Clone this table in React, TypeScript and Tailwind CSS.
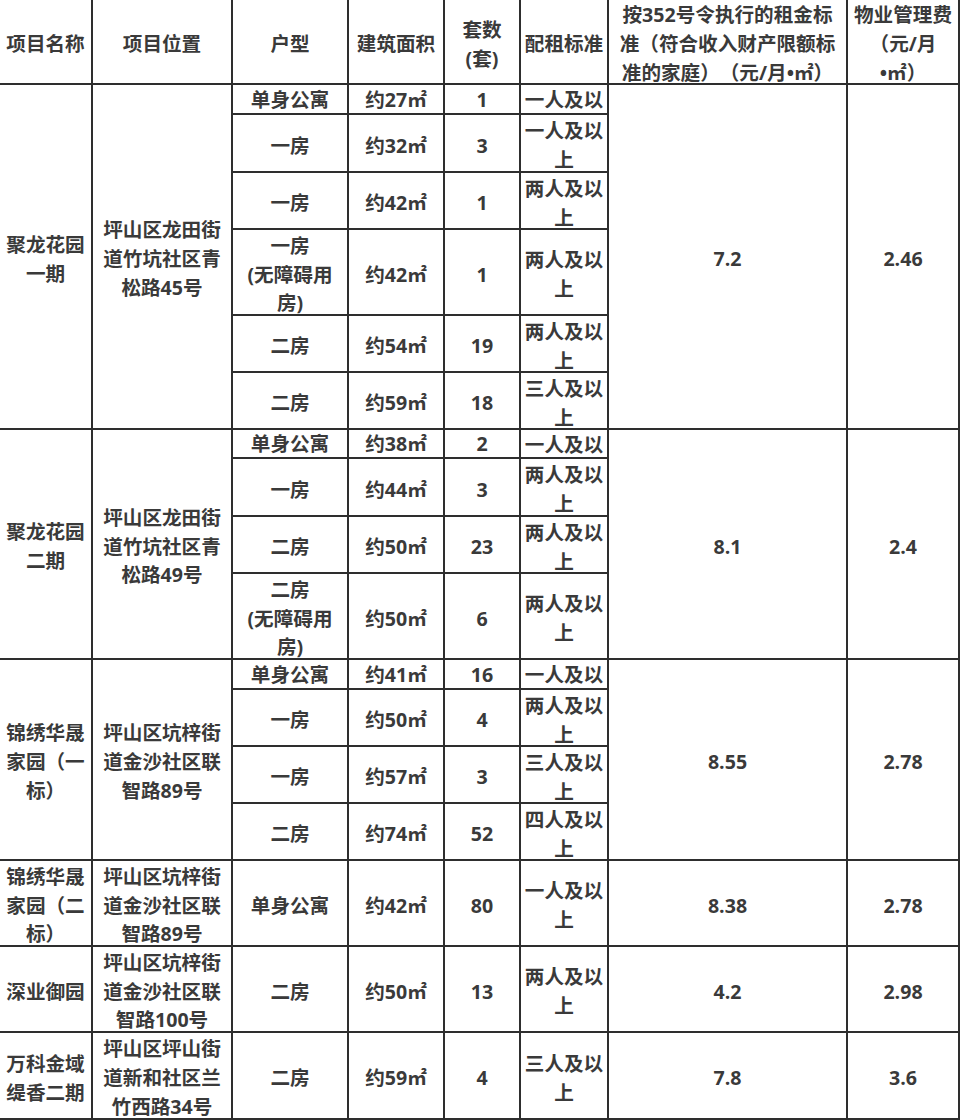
import React from "react";

type Row = { type: string[]; area: string; count: string; std: string[]; clip?: boolean };
type Group = { name: string[]; loc: string[]; rent: string; fee: string; span: string; rows: Row[] };

const groups: Group[] = [
  {
    name: ["聚龙花园", "一期"],
    loc: ["坪山区龙田街", "道竹坑社区青", "松路45号"],
    rent: "7.2",
    fee: "2.46",
    span: "row-span-6",
    rows: [
      { type: ["单身公寓"], area: "约27㎡", count: "1", std: ["一人及以", "上"], clip: true },
      { type: ["一房"], area: "约32㎡", count: "3", std: ["一人及以", "上"] },
      { type: ["一房"], area: "约42㎡", count: "1", std: ["两人及以", "上"] },
      { type: ["一房", "(无障碍用", "房)"], area: "约42㎡", count: "1", std: ["两人及以", "上"] },
      { type: ["二房"], area: "约54㎡", count: "19", std: ["两人及以", "上"] },
      { type: ["二房"], area: "约59㎡", count: "18", std: ["三人及以", "上"] },
    ],
  },
  {
    name: ["聚龙花园", "二期"],
    loc: ["坪山区龙田街", "道竹坑社区青", "松路49号"],
    rent: "8.1",
    fee: "2.4",
    span: "row-span-4",
    rows: [
      { type: ["单身公寓"], area: "约38㎡", count: "2", std: ["一人及以", "上"], clip: true },
      { type: ["一房"], area: "约44㎡", count: "3", std: ["两人及以", "上"] },
      { type: ["二房"], area: "约50㎡", count: "23", std: ["两人及以", "上"] },
      { type: ["二房", "(无障碍用", "房)"], area: "约50㎡", count: "6", std: ["两人及以", "上"] },
    ],
  },
  {
    name: ["锦绣华晟", "家园（一", "标）"],
    loc: ["坪山区坑梓街", "道金沙社区联", "智路89号"],
    rent: "8.55",
    fee: "2.78",
    span: "row-span-4",
    rows: [
      { type: ["单身公寓"], area: "约41㎡", count: "16", std: ["一人及以", "上"], clip: true },
      { type: ["一房"], area: "约50㎡", count: "4", std: ["两人及以", "上"] },
      { type: ["一房"], area: "约57㎡", count: "3", std: ["三人及以", "上"] },
      { type: ["二房"], area: "约74㎡", count: "52", std: ["四人及以", "上"] },
    ],
  },
  {
    name: ["锦绣华晟", "家园（二", "标）"],
    loc: ["坪山区坑梓街", "道金沙社区联", "智路89号"],
    rent: "8.38",
    fee: "2.78",
    span: "row-span-1",
    rows: [{ type: ["单身公寓"], area: "约42㎡", count: "80", std: ["一人及以", "上"] }],
  },
  {
    name: ["深业御园"],
    loc: ["坪山区坑梓街", "道金沙社区联", "智路100号"],
    rent: "4.2",
    fee: "2.98",
    span: "row-span-1",
    rows: [{ type: ["二房"], area: "约50㎡", count: "13", std: ["两人及以", "上"] }],
  },
  {
    name: ["万科金域", "缇香二期"],
    loc: ["坪山区坪山街", "道新和社区兰", "竹西路34号"],
    rent: "7.8",
    fee: "3.6",
    span: "row-span-1",
    rows: [{ type: ["二房"], area: "约59㎡", count: "4", std: ["三人及以", "上"] }],
  },
];

const header: string[][] = [
  ["项目名称"],
  ["项目位置"],
  ["户型"],
  ["建筑面积"],
  ["套数", "(套)"],
  ["配租标准"],
  ["按352号令执行的租金标", "准（符合收入财产限额标", "准的家庭）（元/月•㎡）"],
  ["物业管理费", "（元/月", "•㎡）"],
];

function Cell({
  lines,
  className = "",
  top = false,
  small = false,
}: {
  lines: string[];
  className?: string;
  top?: boolean;
  small?: boolean;
}) {
  return (
    <div
      className={`flex flex-col items-center ${top ? "justify-start overflow-hidden" : "justify-center"} border-r-2 border-b-2 border-[#2e2e2e] text-center ${className}`}
    >
      {lines.map((l, i) => (
        <span key={i} className={`block whitespace-nowrap ${small ? "translate-y-[1px]" : "translate-y-[3px]"}`}>
          {l}
        </span>
      ))}
    </div>
  );
}

export default function App() {
  return (
    <div className="w-[960px] h-[1120px] bg-white overflow-hidden">
      <div className="grid grid-cols-[93px_140px_116px_96px_76px_88px_239px_112px] grid-rows-[85px_30px_58px_57px_86px_57px_57px_29px_58px_57px_86px_30px_57px_57px_57px_86px_86px_87px] text-[19.6px] leading-[28.7px] font-bold text-[#3a3a3a] [font-family:'Open_Sans','Noto_Sans_CJK_SC',sans-serif] [text-spacing-trim:space-all]">
        {header.map((h, i) => (
          <Cell key={"h" + i} lines={h} />
        ))}
        {groups.map((g, gi) => (
          <React.Fragment key={"g" + gi}>
            {g.rows.map((r, ri) => (
              <React.Fragment key={"r" + ri}>
                {ri === 0 && <Cell lines={g.name} className={g.span} />}
                {ri === 0 && <Cell lines={g.loc} className={g.span} />}
                <Cell lines={r.type} small={!!r.clip} />
                <Cell lines={[r.area]} small={!!r.clip} />
                <Cell lines={[r.count]} small={!!r.clip} />
                <Cell lines={r.std} top={!!r.clip} small={!!r.clip} />
                {ri === 0 && <Cell lines={[g.rent]} className={g.span} />}
                {ri === 0 && <Cell lines={[g.fee]} className={g.span} />}
              </React.Fragment>
            ))}
          </React.Fragment>
        ))}
      </div>
    </div>
  );
}
